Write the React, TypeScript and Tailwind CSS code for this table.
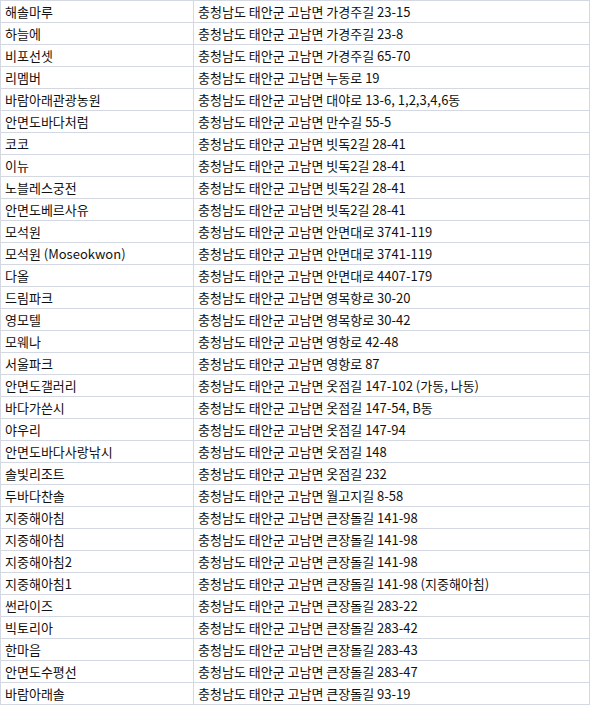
const rows: [string, string][] = [
  ['해솔마루', '가경주길 23-15'],
  ['하늘에', '가경주길 23-8'],
  ['비포선셋', '가경주길 65-70'],
  ['리멤버', '누동로 19'],
  ['바람아래관광농원', '대야로 13-6, 1,2,3,4,6동'],
  ['안면도바다처럼', '만수길 55-5'],
  ['코코', '빗독2길 28-41'],
  ['이뉴', '빗독2길 28-41'],
  ['노블레스궁전', '빗독2길 28-41'],
  ['안면도베르사유', '빗독2길 28-41'],
  ['모석원', '안면대로 3741-119'],
  ['모석원 (Moseokwon)', '안면대로 3741-119'],
  ['다올', '안면대로 4407-179'],
  ['드림파크', '영목항로 30-20'],
  ['영모텔', '영목항로 30-42'],
  ['모웨나', '영항로 42-48'],
  ['서울파크', '영항로 87'],
  ['안면도갤러리', '옷점길 147-102 (가동, 나동)'],
  ['바다가쓴시', '옷점길 147-54, B동'],
  ['야우리', '옷점길 147-94'],
  ['안면도바다사랑낚시', '옷점길 148'],
  ['솔빛리조트', '옷점길 232'],
  ['두바다찬솔', '월고지길 8-58'],
  ['지중해아침', '큰장돌길 141-98'],
  ['지중해아침', '큰장돌길 141-98'],
  ['지중해아침2', '큰장돌길 141-98'],
  ['지중해아침1', '큰장돌길 141-98 (지중해아침)'],
  ['썬라이즈', '큰장돌길 283-22'],
  ['빅토리아', '큰장돌길 283-42'],
  ['한마음', '큰장돌길 283-43'],
  ['안면도수평선', '큰장돌길 283-47'],
  ['바람아래솔', '큰장돌길 93-19'],
];

export default function App() {
  return (
    <div
      className="w-[590px] border-l border-t border-[#d4d8e2] bg-white text-[13px] leading-[20px] text-[#111]"
      style={{ fontFamily: '"Noto Sans CJK KR", "Noto Sans", sans-serif' }}
    >
      {rows.map(([name, addr], i) => (
        <div key={i} className="grid grid-cols-[193px_396px]">
          <div className="h-[22px] border-r border-b border-[#d4d8e2] pl-[4px] flex items-center whitespace-nowrap overflow-hidden">
            {name}
          </div>
          <div className="h-[22px] border-r border-b border-[#d4d8e2] pl-[4px] flex items-center whitespace-nowrap overflow-hidden">
            충청남도 태안군 고남면 {addr}
          </div>
        </div>
      ))}
    </div>
  );
}
